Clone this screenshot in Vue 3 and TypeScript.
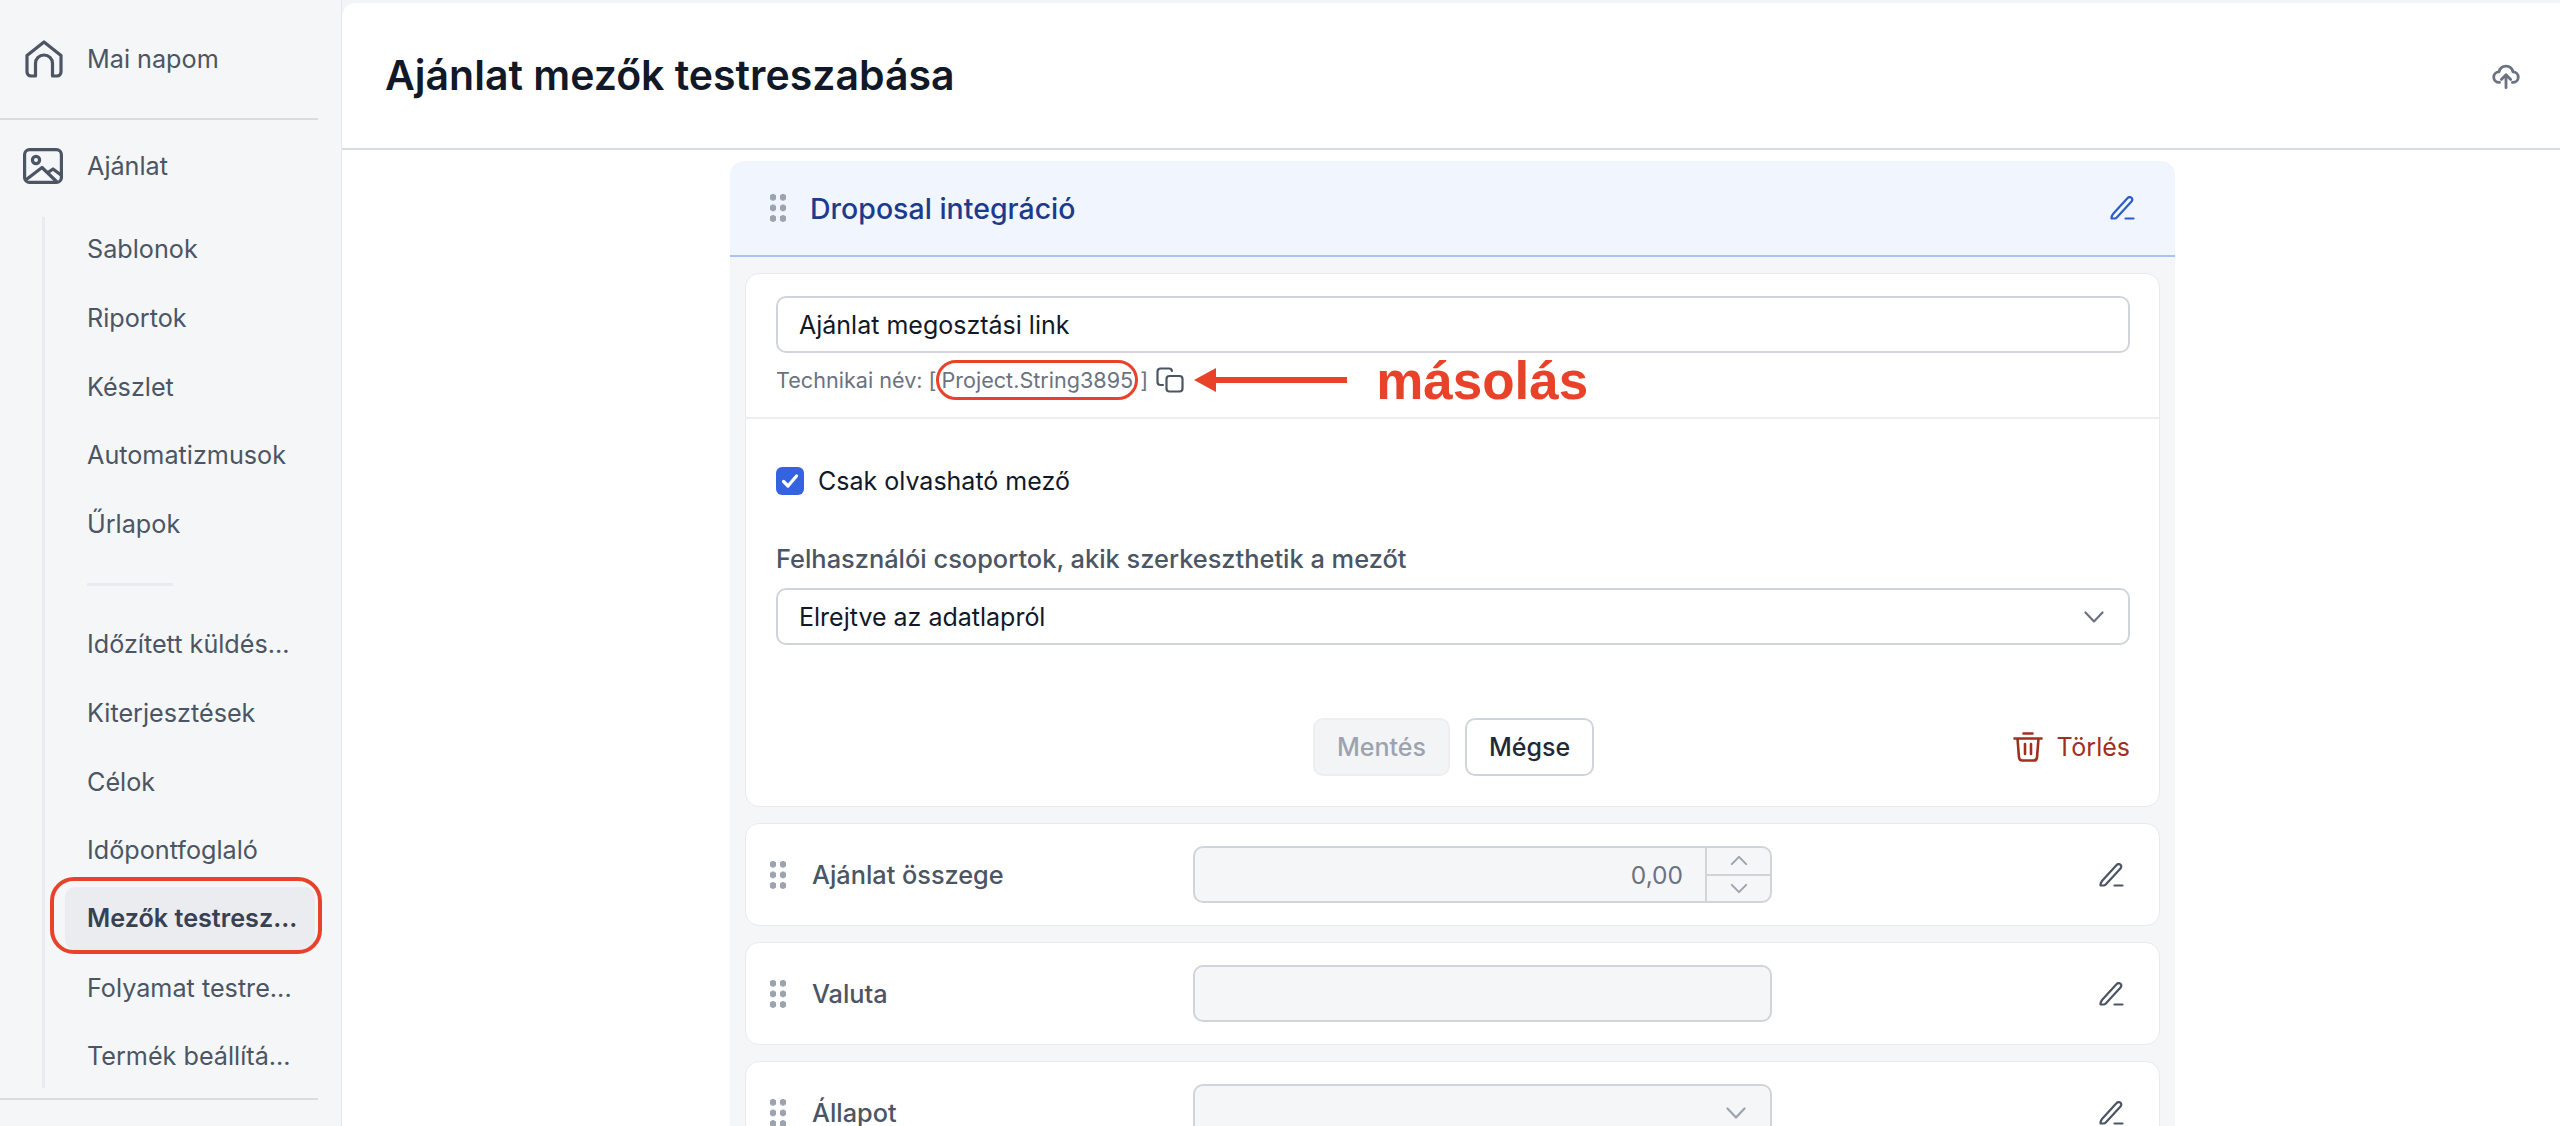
<template>
  <div class="page">
    <aside class="sidebar">
      <div class="top-item">
        <svg class="nav-icon" viewBox="0 0 38 38" fill="none" stroke="currentColor" stroke-width="3.200" stroke-linejoin="round" stroke-linecap="round">
          <path d="M2 15.500 19 2l17 13.500V32a4 4 0 0 1-4 4h-4.500V23.500a8.500 8.500 0 0 0-17 0V36H6a4 4 0 0 1-4-4z" />
        </svg>
        <span>Mai napom</span>
      </div>
      <div class="nav-divider" />
      <div class="top-item section">
        <svg class="nav-icon wide" viewBox="0 0 40 36" fill="none" stroke="currentColor" stroke-width="3.200" stroke-linejoin="round" stroke-linecap="round">
          <rect x="1.600" y="1.600" width="36.800" height="32.800" rx="5" />
          <circle cx="13" cy="12" r="3.600" />
          <path d="M4 31 19 19.500 33 33M25 24.500l5-3.500 8 6" />
        </svg>
        <span>Ajánlat</span>
      </div>
      <div class="sub-list">
        <div v-for="item in firstItems" :key="item" class="sub-item">{{ item }}</div>
        <div class="sub-sep" />
        <div v-for="item in secondItems" :key="item" class="sub-item" :class="{ active: item === activeItem }">
          <span class="sub-text">{{ item }}</span>
          <div v-if="item === activeItem" class="red-box" />
        </div>
      </div>
      <div class="nav-divider bottom" />
    </aside>

    <main class="main">
      <header class="topbar">
        <h1>Ajánlat mezők testreszabása</h1>
        <svg class="cloud" viewBox="0 0 24 24" fill="none" stroke="currentColor" stroke-width="2.400" stroke-linecap="round" stroke-linejoin="round">
          <path d="M6.500 17.500C3.500 17.500 1.500 15.500 1.500 13s2-4.500 4.500-4.500C6.700 5.500 9 3.500 12 3.500s5.300 2 6 5c2.500 0 4.500 2 4.500 4.500s-2 4.500-5 4.500" />
          <path d="M12 22V11.500M8 15l4-4 4 4" />
        </svg>
      </header>

      <section class="group">
        <div class="group-head">
          <span class="grip" />
          <span class="group-title">Droposal integráció</span>
          <svg class="pencil blue-icon" viewBox="0 0 25 24" fill="none" stroke="currentColor" stroke-width="2.200" stroke-linecap="round" stroke-linejoin="round">
            <path d="M1.500 22.500h3c1 0 1.800-.5 2.500-1.300L21.500 5.500c1.200-1.300 1-3-.2-3.800-1.200-.9-2.900-.6-3.900.6L3 18c-.9 1.100-1.500 2.600-1.500 4.500zM15.500 22.500h8" />
          </svg>
        </div>
        <div class="group-body">
          <div class="card open">
            <div class="name-part">
              <div class="field">Ajánlat megosztási link</div>
              <div class="tech-row">
                <span>Technikai név: [</span>
                <span class="tech-name">Project.String3895<span class="ellipse" /></span>
                <span>]</span>
                <svg class="copy" viewBox="0 0 28 26" fill="none" stroke="currentColor" stroke-width="2.200" stroke-linecap="round" stroke-linejoin="round">
                  <rect x="10.500" y="9" width="16" height="15.500" rx="3" />
                  <path d="M7 18H4.500A3 3 0 0 1 1.500 15V4.500a3 3 0 0 1 3-3H13a3 3 0 0 1 3 2.500" />
                </svg>
                <svg class="arrow" viewBox="0 0 153 24">
                  <path d="M0 12 22 0v9h131v6H22v9z" fill="currentColor" />
                </svg>
                <span class="copy-note">másolás</span>
              </div>
            </div>
            <div class="options-part">
              <label class="check-row">
                <span class="checkbox">
                  <svg viewBox="0 0 28 28" fill="none" stroke="#fff" stroke-width="3.200" stroke-linecap="round" stroke-linejoin="round">
                    <path d="M7.500 14.500 12 19l8.500-10" />
                  </svg>
                </span>
                <span>Csak olvasható mező</span>
              </label>
              <div class="groups-label">Felhasználói csoportok, akik szerkeszthetik a mezőt</div>
              <div class="field select">
                <span>Elrejtve az adatlapról</span>
                <svg class="chevron" viewBox="0 0 20 12" fill="none" stroke="currentColor" stroke-width="2.200" stroke-linecap="round" stroke-linejoin="round">
                  <path d="M1.500 1.500 10 10.500l8.500-9" />
                </svg>
              </div>
              <div class="actions">
                <div class="buttons">
                  <button class="btn disabled" type="button">Mentés</button>
                  <button class="btn" type="button">Mégse</button>
                </div>
                <div class="delete">
                  <svg class="trash" viewBox="0 0 30 30" fill="none" stroke="currentColor" stroke-width="2.600" stroke-linecap="round" stroke-linejoin="round">
                    <path d="M1.500 6.500h27M10.500 1.500h9M4.500 6.500l1.500 19c.2 2 1.500 3 3.500 3h11c2 0 3.300-1 3.500-3l1.500-19M12 12v10M18 12v10" />
                  </svg>
                  <span>Törlés</span>
                </div>
              </div>
            </div>
          </div>

          <div v-for="row in rows" :key="row.label" class="card row">
            <span class="grip" />
            <span class="row-label">{{ row.label }}</span>
            <div class="row-input" :class="row.kind">
              <span v-if="row.kind === 'number'" class="num-value">0,00</span>
              <div v-if="row.kind === 'number'" class="stepper">
                <div class="step">
                  <svg viewBox="0 0 20 12" fill="none" stroke="currentColor" stroke-width="2.200" stroke-linecap="round" stroke-linejoin="round"><path d="M2 10 10 2l8 8" /></svg>
                </div>
                <div class="step lower">
                  <svg viewBox="0 0 20 12" fill="none" stroke="currentColor" stroke-width="2.200" stroke-linecap="round" stroke-linejoin="round"><path d="M2 2l8 8 8-8" /></svg>
                </div>
              </div>
              <svg v-if="row.kind === 'choice'" class="chevron" viewBox="0 0 20 12" fill="none" stroke="currentColor" stroke-width="2.200" stroke-linecap="round" stroke-linejoin="round">
                <path d="M1.500 1.500 10 10.500l8.500-9" />
              </svg>
            </div>
            <svg class="pencil" viewBox="0 0 25 24" fill="none" stroke="currentColor" stroke-width="2.200" stroke-linecap="round" stroke-linejoin="round">
              <path d="M1.500 22.500h3c1 0 1.800-.5 2.500-1.300L21.500 5.500c1.200-1.300 1-3-.2-3.800-1.200-.9-2.900-.6-3.900.6L3 18c-.9 1.100-1.500 2.600-1.500 4.500zM15.500 22.500h8" />
            </svg>
          </div>
        </div>
      </section>
    </main>
  </div>
</template>

<script setup lang="ts">
interface FieldRow {
  label: string;
  kind: 'number' | 'text' | 'choice';
}

const firstItems: string[] = ['Sablonok', 'Riportok', 'Készlet', 'Automatizmusok', 'Űrlapok'];
const secondItems: string[] = [
  'Időzített küldés...',
  'Kiterjesztések',
  'Célok',
  'Időpontfoglaló',
  'Mezők testresz...',
  'Folyamat testre...',
  'Termék beállítá...',
];
const activeItem = 'Mezők testresz...';

const rows: FieldRow[] = [
  { label: 'Ajánlat összege', kind: 'number' },
  { label: 'Valuta', kind: 'text' },
  { label: 'Állapot', kind: 'choice' },
];
</script>

<style>
html,
body {
  margin: 0;
  height: 100%;
  overflow: hidden;
  background: #fff;
}
</style>

<style scoped>
.page {
  display: flex;
  height: 1126px;
  overflow: hidden;
  font-family: Inter, 'Noto Sans', sans-serif;
  color: #111827;
  background: #fff;
}

/* sidebar */
.sidebar {
  width: 342px;
  flex: none;
  box-sizing: border-box;
  background: #f5f6f8;
  border-right: 1px solid #e5e7eb;
  padding-top: 24px;
  color: #4b5563;
  font-size: 25.200px;
}
.top-item {
  display: flex;
  align-items: center;
  height: 70px;
  padding-left: 25px;
  gap: 24px;
  margin-bottom: 24px;
}
.top-item.section {
  margin: 13px 0 18px;
  height: 66px;
  padding-left: 23px;
  gap: 24px;
}
.nav-icon {
  width: 38px;
  height: 38px;
  flex: none;
}
.nav-icon.wide {
  width: 40px;
  height: 36px;
}
.nav-divider {
  width: 318px;
  height: 2px;
  background: #d9dce3;
}
.nav-divider.bottom {
  margin-top: 10px;
}
.sub-list {
  margin-left: 42px;
  padding-left: 20px;
  border-left: 3px solid #e9ebef;
  height: 871px;
  box-sizing: border-box;
}
.sub-item {
  position: relative;
  display: flex;
  align-items: center;
  box-sizing: border-box;
  height: 68.700px;
  padding: 0 0 4px 22px;
  white-space: nowrap;
}
.sub-item.active {
  width: 250px;
  height: 63px;
  margin-bottom: 5.700px;
  padding-bottom: 0;
  border-radius: 10px;
  background: #ebecf0;
  font-weight: 600;
  color: #374151;
}
.sub-sep {
  width: 86px;
  height: 3px;
  margin: 23px 0 25.500px 22px;
  background: #e9ebef;
}
.red-box {
  position: absolute;
  left: -15px;
  right: -7px;
  top: -10px;
  bottom: -4px;
  border: 4px solid #e8432a;
  border-radius: 24px;
}

/* main column */
.main {
  flex: 1;
  min-width: 0;
  display: flex;
  flex-direction: column;
  padding-top: 3px;
  background: #f3f4f6;
}
.topbar {
  flex: none;
  height: 147px;
  box-sizing: border-box;
  display: flex;
  align-items: center;
  justify-content: space-between;
  padding: 0 40px 0 43px;
  background: #fff;
  border-top-left-radius: 14px;
  border-bottom: 2px solid #d9dce3;
}
.topbar h1 {
  margin: 0 0 1px;
  font-size: 41px;
  font-weight: 600;
  color: #111827;
}
.cloud {
  width: 28px;
  height: 28px;
  color: #6b7280;
}
.group {
  flex: 1;
  background: #fff;
  padding: 11px 385px 0 388px;
}

.group-head {
  height: 96px;
  box-sizing: border-box;
  display: flex;
  align-items: center;
  padding: 0 40px 0 38px;
  background: #f0f5fe;
  border-bottom: 2px solid #aac3f5;
  border-radius: 14px 14px 0 0;
}
.group-title {
  margin-left: 22px;
  font-size: 28.500px;
  font-weight: 500;
  color: #1e3a8a;
}
.grip {
  flex: none;
  width: 20px;
  height: 32px;
  background-image: radial-gradient(circle 3.400px, #9ca3af 92%, transparent 100%);
  background-size: 10px 10.600px;
}
.pencil {
  flex: none;
  width: 25px;
  height: 24px;
  margin-left: auto;
  color: #4b5563;
}
.pencil.blue-icon {
  color: #2b5cc9;
}
.group-body {
  background: #f5f6f8;
  padding: 16px 15px 0;
  display: flex;
  flex-direction: column;
  gap: 16px;
  height: 900px;
  box-sizing: border-box;
}
.card {
  background: #fff;
  border: 1px solid #e8eaee;
  border-radius: 14px;
  flex: none;
}
.name-part {
  padding: 22px 29px 0 30px;
  height: 145px;
  box-sizing: border-box;
  border-bottom: 2px solid #eceef1;
}
.field {
  box-sizing: border-box;
  height: 57px;
  display: flex;
  align-items: center;
  padding-left: 21px;
  background: #fff;
  border: 2px solid #d1d5db;
  border-radius: 10px;
  font-size: 25px;
  color: #111827;
}
.tech-row {
  position: relative;
  display: flex;
  align-items: center;
  height: 40px;
  margin-top: 7px;
  font-size: 21.600px;
  color: #6b7280;
  white-space: pre;
}
.tech-name {
  position: relative;
  margin: 0 7px 0 5px;
}
.ellipse {
  position: absolute;
  left: -5px;
  right: -5px;
  top: -7px;
  bottom: -7px;
  border: 3px solid #e8432a;
  border-radius: 22px;
}
.copy {
  width: 28px;
  height: 26px;
  margin-left: 8px;
  color: #4b5563;
}
.arrow {
  width: 153px;
  height: 24px;
  margin-left: 10px;
  color: #e8432a;
}
.copy-note {
  margin-left: 29px;
  font-family: 'Liberation Sans', Arial, sans-serif;
  font-size: 53px;
  font-weight: 700;
  color: #e8432a;
}
.options-part {
  padding: 47px 29px 0 30px;
}
.check-row {
  display: flex;
  align-items: center;
  gap: 14px;
  font-size: 25px;
  color: #111827;
}
.checkbox {
  width: 28px;
  height: 28px;
  border-radius: 6px;
  background: #3563e0;
}
.checkbox svg {
  display: block;
}
.groups-label {
  margin: 47px 0 14px;
  font-size: 25.400px;
  font-weight: 500;
  color: #4b5563;
}
.select {
  justify-content: space-between;
  padding-right: 24px;
}
.chevron {
  width: 20px;
  height: 12px;
  color: #6b7280;
}
.actions {
  display: flex;
  align-items: center;
  margin-top: 73px;
  padding-bottom: 30px;
}
.buttons {
  display: flex;
  gap: 15px;
  margin-left: 537px;
}
.btn {
  height: 58px;
  padding: 0 22px;
  font: 500 25px Inter, 'Noto Sans', sans-serif;
  color: #1f2937;
  background: #fff;
  border: 2px solid #d1d5db;
  border-radius: 10px;
}
.btn.disabled {
  color: #9ca3af;
  background: #f3f4f6;
  border-color: #eceef1;
}
.delete {
  display: flex;
  align-items: center;
  gap: 14px;
  margin-left: auto;
  font-size: 25px;
  color: #9f2f1f;
}
.trash {
  width: 30px;
  height: 30px;
}
.row {
  height: 103px;
  box-sizing: border-box;
  display: flex;
  align-items: center;
  padding: 0 35px 0 22px;
}
.row-label {
  width: 381px;
  margin-left: 24px;
  font-size: 25.300px;
  font-weight: 500;
  color: #4b5563;
}
.row-input {
  position: relative;
  width: 579px;
  height: 57px;
  box-sizing: border-box;
  display: flex;
  align-items: center;
  background: #f5f6f8;
  border: 2px solid #d1d5db;
  border-radius: 10px;
  color: #6b7280;
}
.row-input.choice {
  justify-content: flex-end;
  padding-right: 24px;
}
.row-input.choice .chevron {
  color: #9ca3af;
}
.num-value {
  margin-left: auto;
  margin-right: 22px;
  font-size: 24.500px;
}
.stepper {
  width: 63px;
  height: 100%;
  flex: none;
  display: flex;
  flex-direction: column;
  border-left: 2px solid #d1d5db;
  color: #9ca3af;
}
.step {
  flex: 1;
  display: flex;
  align-items: center;
  justify-content: center;
}
.step.lower {
  border-top: 2px solid #d1d5db;
}
.step svg {
  width: 18px;
  height: 11px;
}
</style>
